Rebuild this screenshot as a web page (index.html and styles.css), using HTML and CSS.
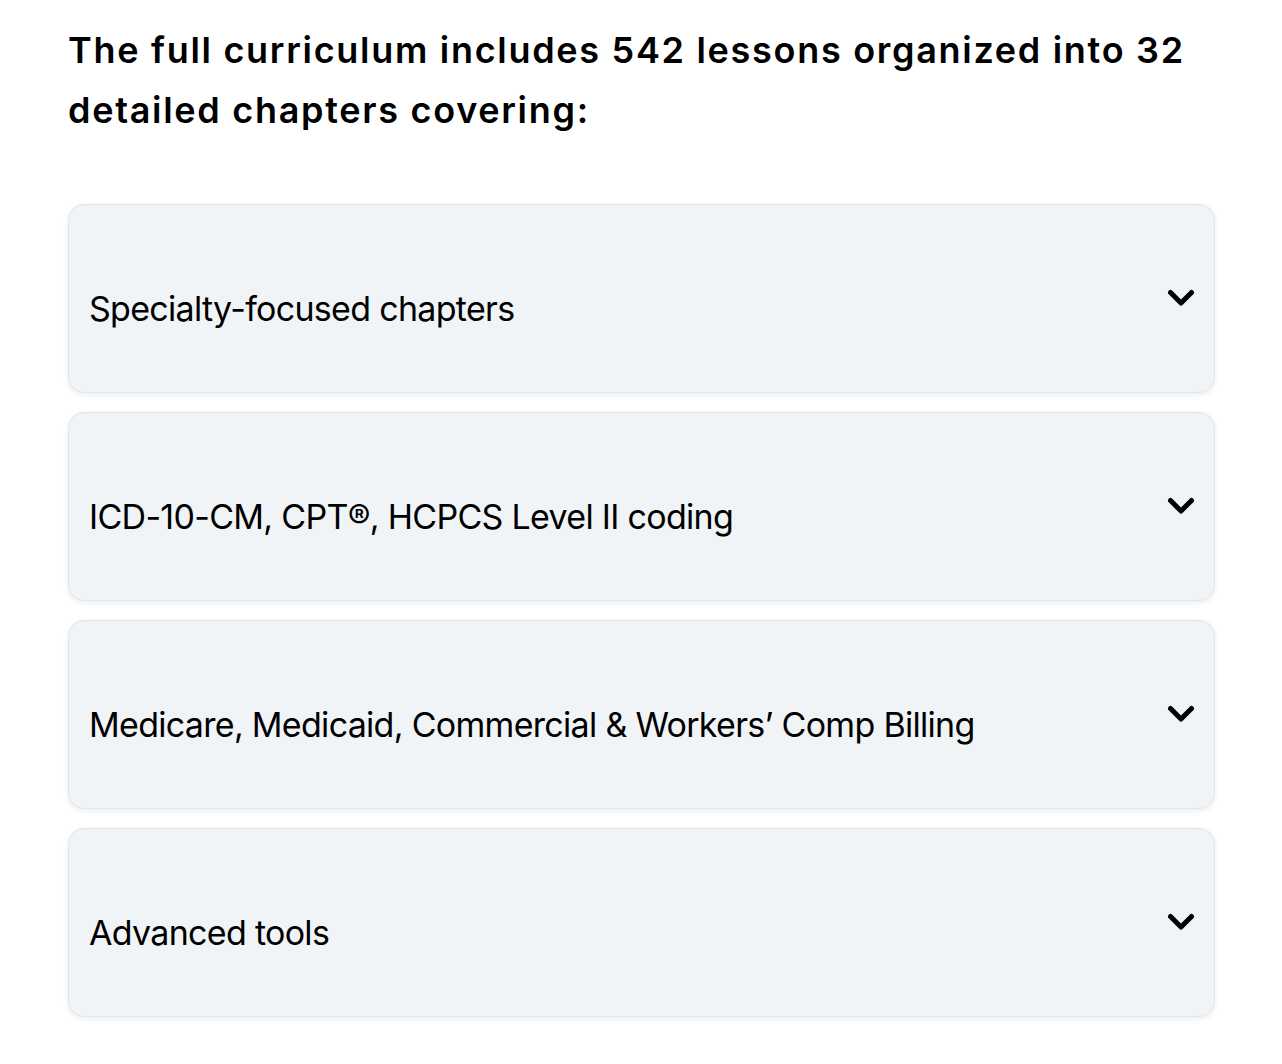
FILE: index.html
```html
<!DOCTYPE html>
<html lang="en">
<head>
<meta charset="utf-8">
<title>Curriculum</title>
<link rel="stylesheet" href="styles.css">
</head>
<body>
<main class="page">
  <h2 class="intro">The full curriculum includes 542 lessons organized into 32 detailed chapters covering:</h2>
  <div class="accordion">
    <div class="item">
      <span class="item-title">Specialty-focused chapters</span>
      <svg class="chev" viewBox="0 0 28 20" width="28" height="20"><path d="M3.5 3.5 L14 14 L24.5 3.5" fill="none" stroke="#000" stroke-width="5" stroke-linecap="round" stroke-linejoin="round"/></svg>
    </div>
    <div class="item">
      <span class="item-title">ICD-10-CM, CPT®, HCPCS Level II coding</span>
      <svg class="chev" viewBox="0 0 28 20" width="28" height="20"><path d="M3.5 3.5 L14 14 L24.5 3.5" fill="none" stroke="#000" stroke-width="5" stroke-linecap="round" stroke-linejoin="round"/></svg>
    </div>
    <div class="item">
      <span class="item-title">Medicare, Medicaid, Commercial &amp; Workers’ Comp Billing</span>
      <svg class="chev" viewBox="0 0 28 20" width="28" height="20"><path d="M3.5 3.5 L14 14 L24.5 3.5" fill="none" stroke="#000" stroke-width="5" stroke-linecap="round" stroke-linejoin="round"/></svg>
    </div>
    <div class="item">
      <span class="item-title">Advanced tools</span>
      <svg class="chev" viewBox="0 0 28 20" width="28" height="20"><path d="M3.5 3.5 L14 14 L24.5 3.5" fill="none" stroke="#000" stroke-width="5" stroke-linecap="round" stroke-linejoin="round"/></svg>
    </div>
  </div>
</main>
</body>
</html>
```
FILE: styles.css
```css
html, body {
  margin: 0;
  padding: 0;
  background: #ffffff;
}
body {
  font-family: Inter, "Noto Sans", sans-serif;
  color: #000;
}
.page {
  padding: 20px 67px 40px 68px;
}
.intro {
  margin: 0 0 64px;
  font-size: 36px;
  line-height: 60px;
  font-weight: 600;
  letter-spacing: 1.7px;
}
.accordion {
  display: flex;
  flex-direction: column;
  gap: 19px;
}
.item {
  height: 189px;
  box-sizing: border-box;
  background: #f1f4f7;
  border: 1px solid #e1e4e8;
  border-radius: 16px;
  box-shadow: 0 2px 6px rgba(0, 0, 0, 0.07);
  display: flex;
  align-items: center;
  justify-content: space-between;
  padding: 0 19px 0 20px;
}
.item-title {
  font-size: 34px;
  letter-spacing: -0.7px;
  line-height: 40px;
  margin-top: 21px;
}
.chev {
  flex-shrink: 0;
}
```
